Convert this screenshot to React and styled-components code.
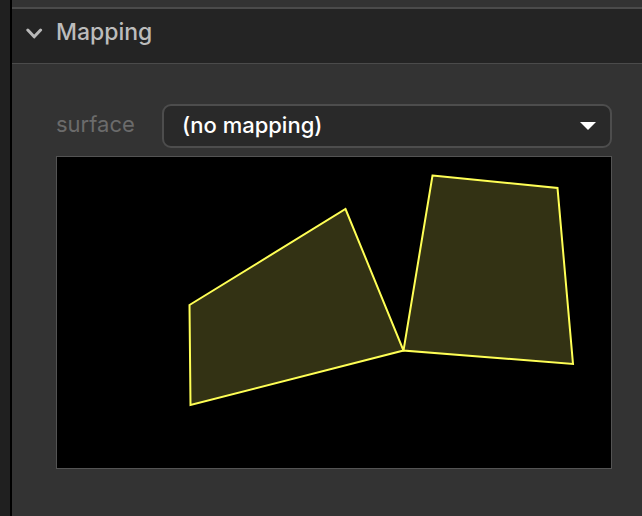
import React, { useState } from "react";
import styled, { createGlobalStyle } from "styled-components";

const GlobalStyle = createGlobalStyle`
  * { box-sizing: border-box; }
  body {
    margin: 0;
    background: #333333;
    font-family: Inter, "Liberation Sans", sans-serif;
  }
`;

const Page = styled.div`
  display: flex;
  min-height: 100vh;
`;

const Gutter = styled.div`
  flex: 0 0 12px;
  background: #202020;
  border-right: 2px solid #000000;
`;

const Panel = styled.main`
  flex: 1;
  min-width: 0;
  padding-top: 7px;
  background: #333333;
`;

const SectionHeading = styled.h2`
  margin: 0;
  border-top: 2px solid #4b4b4b;
  border-bottom: 1px solid #4b4b4b;
  background: #242424;
`;

const SectionToggle = styled.button`
  display: flex;
  align-items: center;
  gap: 13px;
  width: 100%;
  padding: 8px 14px 16px;
  border: 0;
  background: transparent;
  color: #bcbcbc;
  font-family: inherit;
  font-size: 23px;
  font-weight: 500;
  line-height: 30px;
  text-align: left;
`;

const Chevron = styled.svg`
  width: 17px;
  height: 12px;
  flex: none;
  margin-top: 4px;
`;

const SectionBody = styled.div`
  display: flex;
  flex-direction: column;
  gap: 8px;
  padding: 40px 30px 40px 44px;
`;

const Field = styled.div`
  display: flex;
  align-items: center;
`;

const FieldLabel = styled.label`
  flex: 0 0 106px;
  color: #6b6b6b;
  font-size: 22px;
  line-height: 40px;
  padding-bottom: 4px;
`;

const SelectBox = styled.div`
  position: relative;
  flex: 1;
  min-width: 0;
`;

const Select = styled.select`
  display: block;
  appearance: none;
  width: 100%;
  height: 44px;
  padding: 0 50px 2px 18px;
  border: 2px solid #4d4d4d;
  border-radius: 9px;
  background: #292929;
  color: #ffffff;
  font-family: inherit;
  font-size: 22px;
  font-weight: 500;
`;

const Arrow = styled.svg`
  position: absolute;
  top: 18px;
  right: 16px;
  width: 16px;
  height: 8px;
  pointer-events: none;
`;

const Preview = styled.svg`
  display: block;
  width: 100%;
  height: auto;
  border: 1px solid #545454;
  background: #000000;
`;

const Surface = styled.polygon`
  fill: #333214;
  stroke: #ffff55;
  stroke-width: 2;
`;

const surfaces = [
  "132.5,148 288.5,52 346.5,193.5 133.5,248",
  "375.5,18.5 500.5,31 516,207 346.5,193.5",
];

export default function App() {
  const [open, setOpen] = useState(true);
  return (
    <>
      <GlobalStyle />
      <Page>
        <Gutter />
        <Panel>
          <SectionHeading>
            <SectionToggle
              type="button"
              aria-expanded={open}
              onClick={() => setOpen(!open)}
            >
              <Chevron viewBox="0 0 17 12" aria-hidden="true">
                <path
                  d="M1.8 2 L8.2 8.8 L14.6 2"
                  fill="none"
                  stroke="#b9b9b9"
                  strokeWidth="3"
                  strokeLinecap="round"
                  strokeLinejoin="round"
                />
              </Chevron>
              Mapping
            </SectionToggle>
          </SectionHeading>
          {open && (
            <SectionBody>
              <Field>
                <FieldLabel htmlFor="surface">surface</FieldLabel>
                <SelectBox>
                  <Select id="surface" defaultValue="none">
                    <option value="none">(no mapping)</option>
                  </Select>
                  <Arrow viewBox="0 0 16 8" aria-hidden="true">
                    <path d="M0 0 H16 L8 8 Z" fill="#ffffff" />
                  </Arrow>
                </SelectBox>
              </Field>
              <Preview viewBox="0 0 554 311" role="img" aria-label="Surfaces">
                {surfaces.map((points) => (
                  <Surface key={points} points={points} />
                ))}
              </Preview>
            </SectionBody>
          )}
        </Panel>
      </Page>
    </>
  );
}
